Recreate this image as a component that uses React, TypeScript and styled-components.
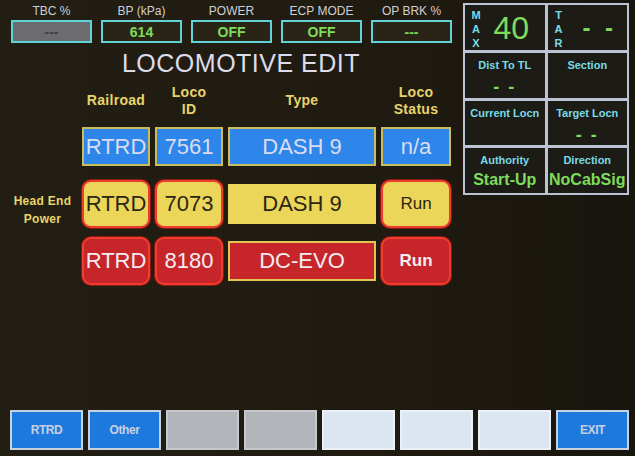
import styled, { createGlobalStyle, css } from "styled-components";

const GlobalStyle = createGlobalStyle`
  html, body {
    margin: 0;
    padding: 0;
    background: #1f1a10;
  }
  * {
    box-sizing: border-box;
  }
`

const Screen = styled.div`
  width: 635px;
  height: 456px;
  display: flex;
  flex-direction: column;
  background: linear-gradient(90deg, #231e13 0%, #201b11 60%, #18150e 100%);
  font-family: "Liberation Sans", Arial, sans-serif;
  overflow: hidden;
`

const Top = styled.div`
  display: flex;
  justify-content: space-between;
`

const LeftColumn = styled.div`
  width: 460px;
  padding-top: 4px;
  display: flex;
  flex-direction: column;
`

const IndicatorRow = styled.div`
  display: flex;
  gap: 9px;
  padding-left: 11px;
`

const Indicator = styled.div`
  width: 81px;
  display: flex;
  flex-direction: column;
  align-items: center;
`

const IndicatorLabel = styled.div`
  font-size: 12px;
  line-height: 14px;
  color: #cfcfd2;
  white-space: nowrap;
`

const IndicatorBox = styled.div<{ $gray?: boolean }>`
  width: 81px;
  height: 23px;
  margin-top: 2px;
  border: 2px solid #5fd3d6;
  background: ${(p) => (p.$gray ? "#6b6b70" : "#2a2416")};
  color: ${(p) => (p.$gray ? "#3e3e42" : "#7ddc5c")};
  font-size: 14px;
  font-weight: bold;
  display: flex;
  align-items: center;
  justify-content: center;
`

const Title = styled.div`
  margin-top: 6px;
  padding-left: 22px;
  text-align: center;
  font-size: 25px;
  line-height: 28px;
  color: #dcdcea;
  letter-spacing: 0.5px;
`

const Table = styled.div`
  margin-top: 6px;
  display: flex;
  flex-direction: column;
`

const Row = styled.div<{ $height: number; $top: number }>`
  display: grid;
  grid-template-columns: 69px 68px 68px 148px 70px;
  column-gap: 5px;
  padding-left: 8px;
  height: ${(p) => p.$height}px;
  margin-top: ${(p) => p.$top}px;
  align-items: center;
`

const Header = styled.div`
  text-align: center;
  font-size: 14px;
  line-height: 17px;
  font-weight: bold;
  color: #e6d46a;
  letter-spacing: 0.3px;
`

const RowLabel = styled.div`
  align-self: end;
  text-align: center;
  font-size: 12px;
  line-height: 18px;
  font-weight: bold;
  color: #e6d46a;
  letter-spacing: 0.3px;
`

type Tone = "blue" | "yellow" | "red";

const tones = {
  blue: css`
    background: #2e86ea;
    color: #dcdcf0;
    border: 2px solid #c9bd5a;
  `,
  yellow: css`
    background: #ecd65a;
    color: #2b2614;
    border: 2px solid #ecd65a;
  `,
  red: css`
    background: #c6252a;
    color: #f4ecf0;
    border: 2px solid #e2c650;
  `,
}

const Cell = styled.div<{ $tone: Tone; $round?: boolean; $small?: boolean }>`
  ${(p) => tones[p.$tone]}
  height: ${(p) => (p.$round ? 48 : p.$tone === "blue" ? 39 : 40)}px;
  display: flex;
  align-items: center;
  justify-content: center;
  font-size: ${(p) => (p.$small ? 17 : 22)}px;
  font-weight: ${(p) => (p.$small && p.$tone === "red" ? "bold" : "normal")};
  ${(p) =>
    p.$round &&
    css`
      border: 2px solid #f03c2c;
      border-radius: 9px;
      box-shadow: 0 0 0 1px #8a1a14;
    `}
`

const Panel = styled.div`
  width: 166px;
  height: 192px;
  margin: 3px 6px 0 0;
  padding: 2px;
  background: #bcc4d4;
  display: grid;
  grid-template-columns: 1fr 1fr;
  grid-template-rows: repeat(4, 1fr);
  gap: 3px;
`

const PanelCell = styled.div`
  background: #1d1b15;
  display: flex;
  flex-direction: column;
  align-items: center;
  padding-top: 6px;
  color: #78dce6;
  font-size: 11px;
  font-weight: bold;
  line-height: 13px;
  white-space: nowrap;
`

const SpeedCell = styled.div`
  background: #1d1b15;
  display: flex;
  align-items: center;
  padding-left: 5px;
`

const VerticalLetters = styled.div`
  display: flex;
  flex-direction: column;
  color: #78dce6;
  font-size: 11px;
  font-weight: bold;
  line-height: 14px;
  width: 12px;
  padding-top: 3px;
  text-align: center;
`

const BigValue = styled.div`
  flex: 1;
  text-align: center;
  color: #7ddc5c;
  font-size: 32px;
  line-height: 34px;
  padding-right: 4px;
`

const DashValue = styled.div<{ $big?: boolean }>`
  ${(p) =>
    p.$big
      ? css`
          flex: 1;
          text-align: center;
          padding-left: 8px;
          font-size: 24px;
          letter-spacing: 4px;
        `
      : css`
          margin-top: 5px;
          font-size: 18px;
          letter-spacing: 2px;
        `}
  color: #7ddc5c;
  font-weight: bold;
  line-height: 20px;
`

const PanelValue = styled.div`
  margin-top: 3px;
  color: #7ddc5c;
  font-size: 16px;
  line-height: 20px;
  font-weight: bold;
`

const ButtonBar = styled.div`
  margin-top: auto;
  display: flex;
  gap: 5px;
  padding: 0 4px 6px 10px;
`

type ButtonKind = "blue" | "gray" | "light";

const buttonKinds = {
  blue: css`
    background: #1e79dc;
    border: 2px solid #c8d2de;
  `,
  gray: css`
    background: #b2b6ba;
    border: 2px solid #c6c9cc;
  `,
  light: css`
    background: #dce6f0;
    border: 2px solid #eaf0f6;
  `,
}

const SoftButton = styled.div<{ $kind: ButtonKind }>`
  ${(p) => buttonKinds[p.$kind]}
  width: 73px;
  height: 40px;
  display: flex;
  align-items: center;
  justify-content: center;
  color: #c8d0e2;
  font-size: 12px;
  font-weight: bold;
  letter-spacing: -0.4px;
`

const indicators = [
  { label: "TBC %", value: "---", gray: true },
  { label: "BP (kPa)", value: "614" },
  { label: "POWER", value: "OFF" },
  { label: "ECP MODE", value: "OFF" },
  { label: "OP BRK %", value: "---" },
]

const buttons: { text: string; kind: ButtonKind }[] = [
  { text: "RTRD", kind: "blue" },
  { text: "Other", kind: "blue" },
  { text: "", kind: "gray" },
  { text: "", kind: "gray" },
  { text: "", kind: "light" },
  { text: "", kind: "light" },
  { text: "", kind: "light" },
  { text: "EXIT", kind: "blue" },
]

export default function App() {
  return (
    <>
      <GlobalStyle />
      <Screen>
        <Top>
          <LeftColumn>
            <IndicatorRow>
              {indicators.map((ind) => (
                <Indicator key={ind.label}>
                  <IndicatorLabel>{ind.label}</IndicatorLabel>
                  <IndicatorBox $gray={ind.gray}>{ind.value}</IndicatorBox>
                </Indicator>
              ))}
            </IndicatorRow>
            <Title>LOCOMOTIVE EDIT</Title>
            <Table>
              <Row $height={35} $top={0}>
                <span />
                <Header>Railroad</Header>
                <Header>Loco<br />ID</Header>
                <Header>Type</Header>
                <Header>Loco<br />Status</Header>
              </Row>
              <Row $height={39} $top={9}>
                <span />
                <Cell $tone="blue">RTRD</Cell>
                <Cell $tone="blue">7561</Cell>
                <Cell $tone="blue">DASH 9</Cell>
                <Cell $tone="blue">n/a</Cell>
              </Row>
              <Row $height={48} $top={14}>
                <RowLabel>Head End<br />Power</RowLabel>
                <Cell $tone="yellow" $round>RTRD</Cell>
                <Cell $tone="yellow" $round>7073</Cell>
                <Cell $tone="yellow">DASH 9</Cell>
                <Cell $tone="yellow" $round $small>Run</Cell>
              </Row>
              <Row $height={48} $top={9}>
                <span />
                <Cell $tone="red" $round>RTRD</Cell>
                <Cell $tone="red" $round>8180</Cell>
                <Cell $tone="red">DC-EVO</Cell>
                <Cell $tone="red" $round $small>Run</Cell>
              </Row>
            </Table>
          </LeftColumn>
          <Panel>
            <SpeedCell>
              <VerticalLetters><span>M</span><span>A</span><span>X</span></VerticalLetters>
              <BigValue>40</BigValue>
            </SpeedCell>
            <SpeedCell>
              <VerticalLetters><span>T</span><span>A</span><span>R</span></VerticalLetters>
              <DashValue $big>- -</DashValue>
            </SpeedCell>
            <PanelCell>
              Dist To TL
              <DashValue>- -</DashValue>
            </PanelCell>
            <PanelCell>Section</PanelCell>
            <PanelCell>Current Locn</PanelCell>
            <PanelCell>
              Target Locn
              <DashValue>- -</DashValue>
            </PanelCell>
            <PanelCell>
              Authority
              <PanelValue>Start-Up</PanelValue>
            </PanelCell>
            <PanelCell>
              Direction
              <PanelValue>NoCabSig</PanelValue>
            </PanelCell>
          </Panel>
        </Top>
        <ButtonBar>
          {buttons.map((b, i) => (
            <SoftButton key={i} $kind={b.kind}>{b.text}</SoftButton>
          ))}
        </ButtonBar>
      </Screen>
    </>
  )
}
